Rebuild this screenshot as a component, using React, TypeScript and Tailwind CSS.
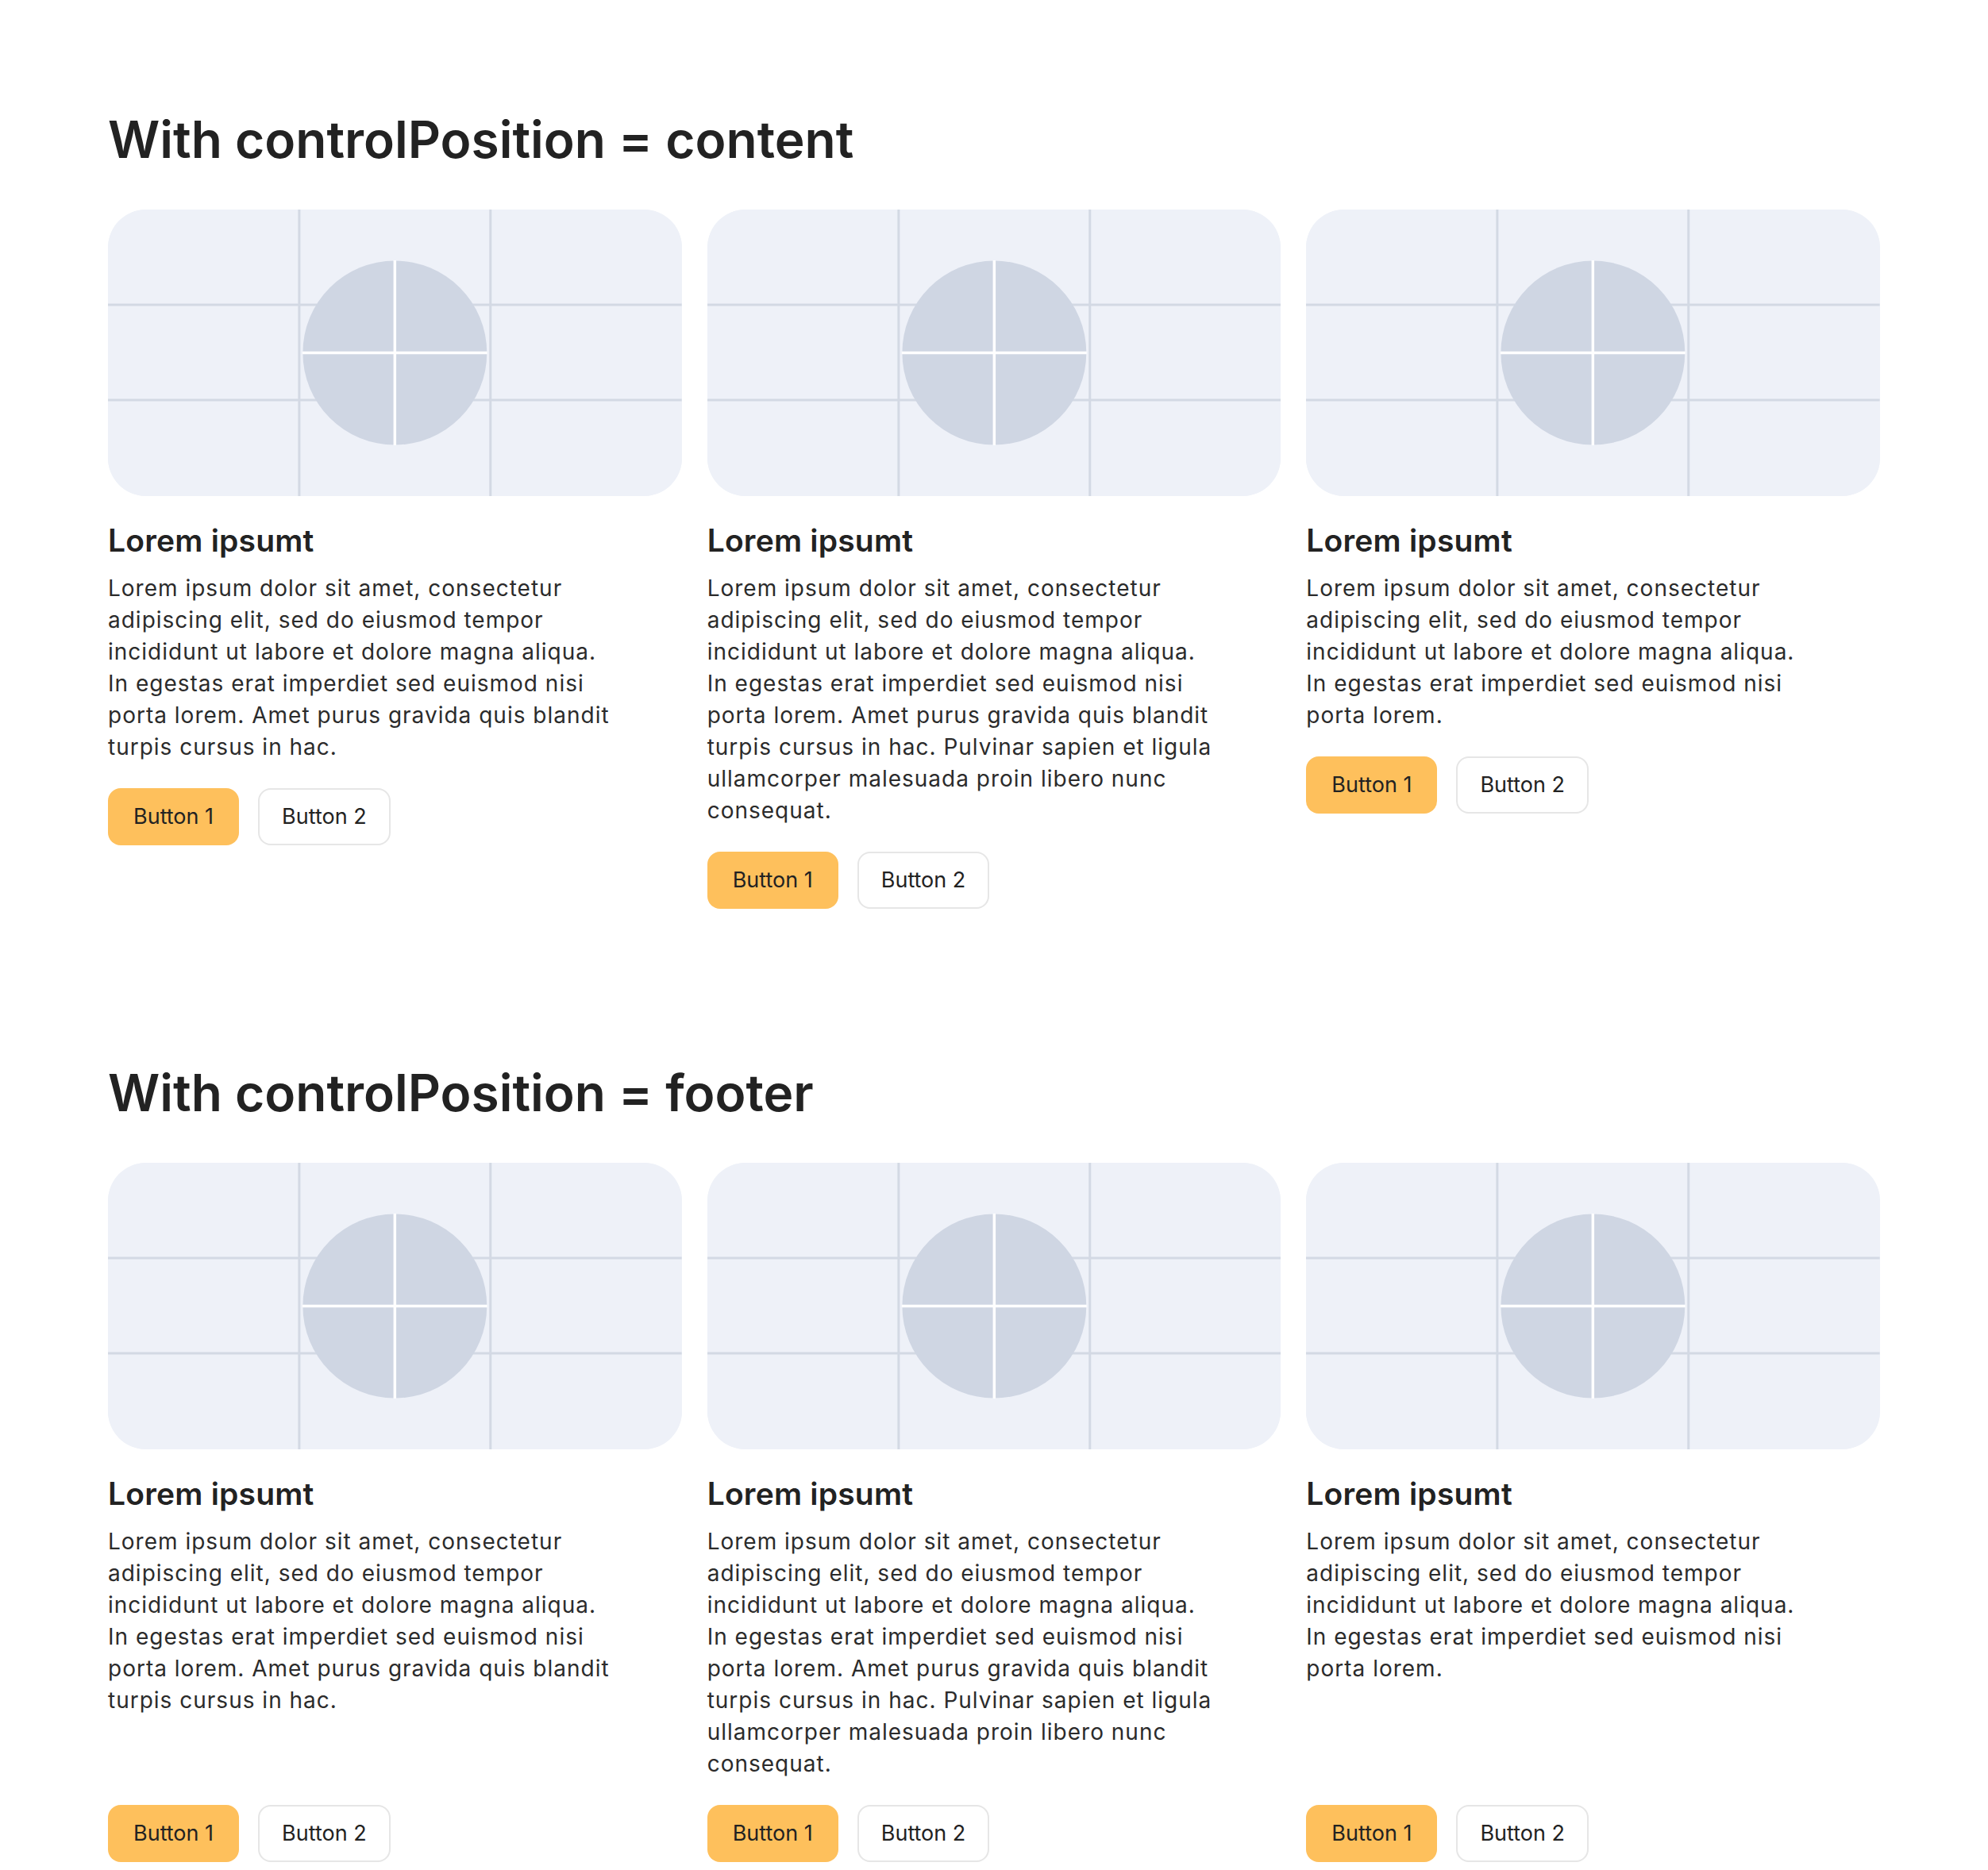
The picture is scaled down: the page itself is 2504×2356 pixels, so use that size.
import React from "react";

const short =
  "Lorem ipsum dolor sit amet, consectetur adipiscing elit, sed do eiusmod tempor incididunt ut labore et dolore magna aliqua. In egestas erat imperdiet sed euismod nisi porta lorem.";
const medium =
  short + " Amet purus gravida quis blandit turpis cursus in hac.";
const long = medium + " Pulvinar sapien et ligula ullamcorper malesuada proin libero nunc consequat.";

const texts = [medium, long, short];

const Placeholder = () => (
  <div className="h-[361px] w-full overflow-hidden rounded-[48px] bg-[#eef1f8]">
    <svg viewBox="0 0 723 361" className="block h-full w-full" preserveAspectRatio="none">
      <rect width="723" height="361" fill="#eef1f8" />
      <line x1="241" y1="0" x2="241" y2="361" stroke="#d3d9e4" strokeWidth="3" />
      <line x1="482" y1="0" x2="482" y2="361" stroke="#d3d9e4" strokeWidth="3" />
      <line x1="0" y1="120" x2="723" y2="120" stroke="#d3d9e4" strokeWidth="3" />
      <line x1="0" y1="240" x2="723" y2="240" stroke="#d3d9e4" strokeWidth="3" />
      <circle cx="361.5" cy="180.5" r="116" fill="#cfd6e3" />
      <line x1="361.5" y1="64" x2="361.5" y2="297" stroke="#ffffff" strokeWidth="3.5" />
      <line x1="245" y1="180.5" x2="478" y2="180.5" stroke="#ffffff" strokeWidth="3.5" />
    </svg>
  </div>
);

const Buttons = ({ footer }: { footer: boolean }) => (
  <div className={`flex gap-6 pt-8 ${footer ? "mt-auto" : ""}`}>
    <button className="h-[72px] rounded-2xl bg-[#fec05c] px-8 text-[27px] text-[#222]">
      Button 1
    </button>
    <button className="h-[72px] rounded-2xl border-2 border-[#e6e6e6] bg-white px-[28px] text-[27px] text-[#222]">
      Button 2
    </button>
  </div>
);

const Card = ({ text, footer }: { text: string; footer: boolean }) => (
  <div className="flex flex-col">
    <Placeholder />
    <h3 className="mt-8 text-[39px] font-semibold leading-[48px] tracking-[0.2px] text-[#222]">
      Lorem ipsumt
    </h3>
    <p className="mt-4 max-w-[640px] text-[28px] leading-[40px] tracking-[1px] text-[#2b2b2b]">
      {text}
    </p>
    <Buttons footer={footer} />
  </div>
);

const Section = ({ mode, className }: { mode: "content" | "footer"; className?: string }) => (
  <section className={className}>
    <h2 className="text-[64px] font-semibold leading-[80px] text-[#222]">
      With controlPosition = {mode}
    </h2>
    <div className="mt-12 grid grid-cols-3 gap-8">
      {texts.map((t, i) => (
        <Card key={i} text={t} footer={mode === "footer"} />
      ))}
    </div>
  </section>
);

export default function App() {
  return (
    <div className="min-h-screen bg-white px-[136px] pb-[136px] pt-[136px] font-['Inter',sans-serif]">
      <Section mode="content" />
      <Section mode="footer" className="mt-[192px]" />
    </div>
  );
}
